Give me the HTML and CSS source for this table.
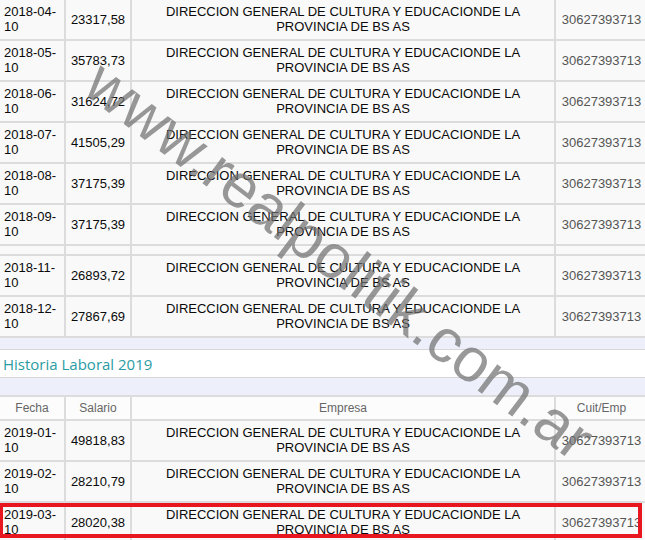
FILE: index.html
```html
<!DOCTYPE html>
<html lang="es">
<head>
<meta charset="utf-8">
<title>Historia Laboral</title>
<link rel="stylesheet" href="styles.css">
</head>
<body>
<div class="page">
  <table class="grid">
    <colgroup><col class="c-fecha"><col class="c-sal"><col class="c-emp"><col class="c-cuit"></colgroup>
    <tbody>
      <tr><td class="fecha">2018-04-10</td><td class="sal">23317,58</td><td class="emp">DIRECCION GENERAL DE CULTURA Y EDUCACIONDE LA PROVINCIA DE BS AS</td><td class="cuit">30627393713</td></tr>
      <tr><td class="fecha">2018-05-10</td><td class="sal">35783,73</td><td class="emp">DIRECCION GENERAL DE CULTURA Y EDUCACIONDE LA PROVINCIA DE BS AS</td><td class="cuit">30627393713</td></tr>
      <tr><td class="fecha">2018-06-10</td><td class="sal">31624,72</td><td class="emp">DIRECCION GENERAL DE CULTURA Y EDUCACIONDE LA PROVINCIA DE BS AS</td><td class="cuit">30627393713</td></tr>
      <tr><td class="fecha">2018-07-10</td><td class="sal">41505,29</td><td class="emp">DIRECCION GENERAL DE CULTURA Y EDUCACIONDE LA PROVINCIA DE BS AS</td><td class="cuit">30627393713</td></tr>
      <tr><td class="fecha">2018-08-10</td><td class="sal">37175,39</td><td class="emp">DIRECCION GENERAL DE CULTURA Y EDUCACIONDE LA PROVINCIA DE BS AS</td><td class="cuit">30627393713</td></tr>
      <tr><td class="fecha">2018-09-10</td><td class="sal">37175,39</td><td class="emp">DIRECCION GENERAL DE CULTURA Y EDUCACIONDE LA PROVINCIA DE BS AS</td><td class="cuit">30627393713</td></tr>
      <tr class="blank"><td></td><td></td><td></td><td></td></tr>
      <tr><td class="fecha">2018-11-10</td><td class="sal">26893,72</td><td class="emp">DIRECCION GENERAL DE CULTURA Y EDUCACIONDE LA PROVINCIA DE BS AS</td><td class="cuit">30627393713</td></tr>
      <tr><td class="fecha">2018-12-10</td><td class="sal">27867,69</td><td class="emp">DIRECCION GENERAL DE CULTURA Y EDUCACIONDE LA PROVINCIA DE BS AS</td><td class="cuit">30627393713</td></tr>
    </tbody>
  </table>

  <div class="panel"><h2 class="panel-title">Historia Laboral 2019</h2></div>

  <table class="grid grid-2019">
    <colgroup><col class="c-fecha"><col class="c-sal"><col class="c-emp"><col class="c-cuit"></colgroup>
    <thead>
      <tr><th>Fecha</th><th>Salario</th><th>Empresa</th><th>Cuit/Emp</th></tr>
    </thead>
    <tbody>
      <tr><td class="fecha">2019-01-10</td><td class="sal">49818,83</td><td class="emp">DIRECCION GENERAL DE CULTURA Y EDUCACIONDE LA PROVINCIA DE BS AS</td><td class="cuit">30627393713</td></tr>
      <tr><td class="fecha">2019-02-10</td><td class="sal">28210,79</td><td class="emp">DIRECCION GENERAL DE CULTURA Y EDUCACIONDE LA PROVINCIA DE BS AS</td><td class="cuit">30627393713</td></tr>
      <tr><td class="fecha">2019-03-10</td><td class="sal">28020,38</td><td class="emp">DIRECCION GENERAL DE CULTURA Y EDUCACIONDE LA PROVINCIA DE BS AS</td><td class="cuit">30627393713</td></tr>
    </tbody>
  </table>

  <div class="highlight"></div>
  <div class="watermark">www.realpolitik.com.ar</div>
</div>
</body>
</html>
```

FILE: styles.css
```css
html, body {
  margin: 0;
  padding: 0;
}
body {
  background: #edf0fa;
  overflow: hidden;
  font-family: "Liberation Sans", Arial, sans-serif;
  font-size: 13px;
  color: #0a0a0a;
}
.page {
  position: relative;
  width: 645px;
  height: 540px;
  overflow: hidden;
}
.grid {
  border-collapse: separate;
  border-spacing: 2px;
  background: #dcdcdc;
  table-layout: fixed;
  width: 651px;
  margin: -2px 0 0 -2px;
}
.c-fecha { width: 64px; }
.c-sal { width: 64px; }
.c-emp { width: 422px; }
.c-cuit { width: 91px; }
.grid td {
  background: #f9f9f9;
  padding: 4px 4px 5px;
  line-height: 15px;
  vertical-align: middle;
}
.grid td.fecha { text-align: left; padding-left: 4px; }
.grid td.sal { text-align: center; padding: 0; }
.grid td.emp { text-align: center; }
.grid td.cuit { text-align: center; color: #555; padding: 0; }
.grid tr.blank td { padding: 0; height: 8px; }

.panel {
  margin-top: 11px;
  background: #fff;
  border-top: 1px solid #d6d6d6;
  border-bottom: 1px solid #d6d6d6;
  height: 27px;
  display: flex;
  align-items: center;
}
.panel-title {
  margin: 0;
  padding-left: 3px;
  font-family: "Open Sans", "DejaVu Sans", sans-serif;
  font-weight: normal;
  font-size: 15px;
  color: #2a9ba3;
}
.grid-2019 {
  margin-top: 17px;
}
.grid th {
  background: #fcfcfc;
  font-weight: normal;
  font-size: 12px;
  color: #666;
  line-height: 16px;
  padding: 3px 0;
  text-align: center;
}
.highlight {
  position: absolute;
  left: -1px;
  top: 503px;
  width: 643px;
  height: 35px;
  box-sizing: border-box;
  border: 4px solid #e8161e;
}
.watermark {
  position: absolute;
  left: 112px;
  top: 50px;
  font-family: "Liberation Sans", Arial, sans-serif;
  font-size: 62px;
  line-height: 1;
  white-space: nowrap;
  color: rgba(110, 110, 110, 0.7);
  transform-origin: 0 0;
  transform: rotate(37deg);
  pointer-events: none;
}
```
